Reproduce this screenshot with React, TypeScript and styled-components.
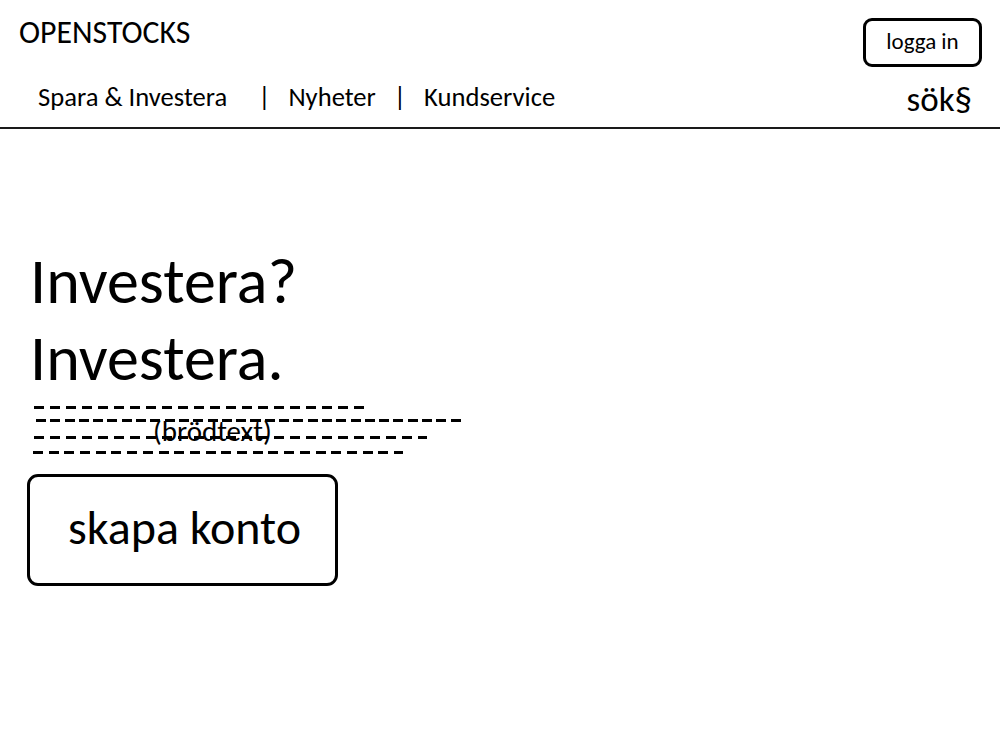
import React from "react";
import styled, { createGlobalStyle } from "styled-components";

const GlobalStyle = createGlobalStyle`
  html, body {
    margin: 0;
    padding: 0;
    background: #ffffff;
  }
  body {
    font-family: Carlito, Lato, "Noto Sans", sans-serif;
    color: #000000;
  }
`;

const Page = styled.div`
  width: 1000px;
  height: 750px;
  background: #ffffff;
  overflow: hidden;
`;

const Header = styled.header`
  border-bottom: 2px solid #1a1a1a;
`;

const TopRow = styled.div`
  display: flex;
  justify-content: space-between;
  align-items: flex-start;
  height: 70px;
  padding: 0 18px 0 19px;
`;

const Brand = styled.div`
  font-size: 31.8px;
  line-height: 32px;
  margin-top: 17px;
`;

const LoginButton = styled.button`
  box-sizing: border-box;
  margin-top: 18px;
  width: 119px;
  height: 49px;
  border: 3px solid #000;
  border-radius: 9px;
  background: #fff;
  font-family: inherit;
  font-size: 23px;
  color: #000;
  padding: 0 0 3px 0;
  line-height: 1;
`;

const NavRow = styled.div`
  display: flex;
  align-items: flex-end;
  justify-content: space-between;
  height: 57px;
  padding: 0 28px 0 38px;
`;

const NavList = styled.nav`
  display: flex;
  align-items: baseline;
  font-size: 26.6px;
  line-height: 26px;
  margin-bottom: 17px;
`;

const NavItem = styled.span`
  white-space: nowrap;
`;

const Separator = styled.span<{ $before: number }>`
  margin-left: ${(p) => p.$before}px;
  margin-right: 18px;
`;

const Search = styled.div`
  font-size: 35px;
  line-height: 35px;
  margin-bottom: 10px;
`;

const Hero = styled.main`
  padding: 114px 0 0 30px;
`;

const Headline = styled.h1`
  margin: 0;
  font-weight: normal;
  font-size: 64px;
  line-height: 77px;
`;

const BodyText = styled.div`
  position: relative;
  width: 440px;
  height: 62px;
  margin-top: 9px;
`;

const DashLine = styled.div<{ $top: number; $left: number; $width: number; $period: number }>`
  margin-top: ${(p) => p.$top}px;
  margin-left: ${(p) => p.$left}px;
  width: ${(p) => p.$width}px;
  height: 3px;
  background: repeating-linear-gradient(
    to right,
    #000 0,
    #000 10px,
    transparent 10px,
    transparent ${(p) => p.$period}px
  );
`;

const BodyLabel = styled.span`
  position: absolute;
  left: 123px;
  top: 11px;
  font-size: 29px;
  line-height: 29px;
`;

const CreateButton = styled.button`
  box-sizing: border-box;
  display: block;
  margin: 6px 0 0 -3px;
  width: 311px;
  height: 112px;
  border: 3px solid #000;
  border-radius: 11px;
  background: #fff;
  font-family: inherit;
  font-size: 48px;
  color: #000;
  padding: 0 0 4px 4px;
  line-height: 1;
`;

export default function App() {
  return (
    <Page>
      <GlobalStyle />
      <Header>
        <TopRow>
          <Brand>OPENSTOCKS</Brand>
          <LoginButton>logga in</LoginButton>
        </TopRow>
        <NavRow>
          <NavList>
            <NavItem>Spara &amp; Investera</NavItem>
            <Separator $before={31}>|</Separator>
            <NavItem>Nyheter</NavItem>
            <Separator $before={18}>|</Separator>
            <NavItem>Kundservice</NavItem>
          </NavList>
          <Search>sök§</Search>
        </NavRow>
      </Header>
      <Hero>
        <Headline>
          Investera?
          <br />
          Investera.
        </Headline>
        <BodyText>
          <DashLine $top={0} $left={4} $width={331} $period={16} />
          <DashLine $top={10} $left={6} $width={428} $period={14.3} />
          <DashLine $top={14} $left={4} $width={393} $period={16} />
          <DashLine $top={12} $left={3} $width={370} $period={15.7} />
          <BodyLabel>(brödtext)</BodyLabel>
        </BodyText>
        <CreateButton>skapa konto</CreateButton>
      </Hero>
    </Page>
  );
}
